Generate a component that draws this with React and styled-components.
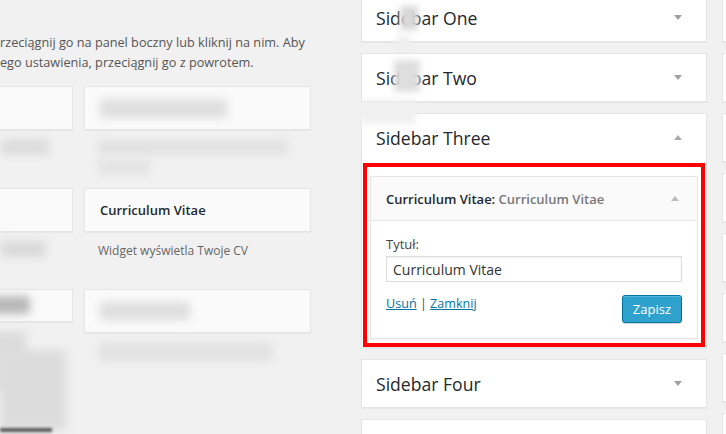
import React from "react";
import styled, { createGlobalStyle } from "styled-components";

const GlobalStyle = createGlobalStyle`
  html, body {
    margin: 0;
    padding: 0;
    background: #f1f1f1;
    overflow: hidden;
  }
  body {
    font-family: "Open Sans", "Noto Sans", sans-serif;
    color: #444;
  }
`;

const Page = styled.div`
  display: flex;
  height: 434px;
  overflow: hidden;
  position: relative;
`;

const LeftArea = styled.div`
  flex: none;
  width: 361px;
  overflow: hidden;
  padding-top: 32px;
  box-sizing: border-box;
`;

const Intro = styled.p`
  margin: 0;
  font-size: 12.7px;
  line-height: 20px;
  color: #555;
  white-space: nowrap;
`;

const WidgetGrid = styled.div`
  display: grid;
  grid-template-columns: 227px 227px;
  grid-auto-rows: 101.5px;
  column-gap: 11px;
  margin: 14px 0 0 -154px;
`;

const Item = styled.div`
  display: flex;
  flex-direction: column;
`;

const Card = styled.div`
  height: 44px;
  box-sizing: border-box;
  border: 1px solid #e5e5e5;
  background: #fafafa;
  box-shadow: 0 1px 1px rgba(0, 0, 0, 0.04);
  padding: 0 15px;
  display: flex;
  align-items: center;
  font-size: 13px;
  font-weight: 600;
  color: #23282d;
`;

const Desc = styled.div`
  padding: 9px 14px 0 14px;
  font-size: 12px;
  line-height: 20px;
  color: #666;
  display: flex;
  flex-direction: column;
  gap: 4px;
`;

const Blur = styled.span`
  display: block;
  width: ${(p) => p.$w}px;
  height: ${(p) => p.$h || 16}px;
  margin-left: ${(p) => p.$ml || 0}px;
  background: ${(p) => p.$c || "#d6d6d6"};
  filter: blur(4px);
  border-radius: 3px;
`;

const SidebarColumn = styled.div`
  flex: none;
  width: 346px;
  display: flex;
  flex-direction: column;
  gap: 11px;
  margin-top: -7px;
`;

const RightColumn = styled(SidebarColumn)`
  width: 100px;
  margin-left: 15px;
`;

const Box = styled.div`
  position: relative;
  flex: none;
  background: #fff;
  border: 1px solid #e5e5e5;
  box-shadow: 0 1px 1px rgba(0, 0, 0, 0.04);
  min-height: 47px;
`;

const BoxHeader = styled.div`
  height: 47px;
  display: flex;
  align-items: center;
  justify-content: space-between;
  padding: 0 24px 0 14px;
`;

const BoxTitle = styled.h2`
  margin: 0;
  font-size: 17.6px;
  font-weight: 400;
  color: #23282d;
`;

const Arrow = styled.span`
  width: 0;
  height: 0;
  border-left: 4px solid transparent;
  border-right: 4px solid transparent;
  ${(p) =>
    p.$up
      ? `border-bottom: 5px solid ${p.$c || "#aaa"};`
      : `border-top: 5px solid ${p.$c || "#a0a0a0"};`}
`;

const BoxBody = styled.div`
  padding: 15px 8px 8px;
`;

const Widget = styled.div`
  border: 1px solid #e5e5e5;
  background: #fff;
  box-shadow: 0 1px 1px rgba(0, 0, 0, 0.04);
`;

const WidgetTop = styled.div`
  height: 43px;
  background: #fafafa;
  border-bottom: 1px solid #e5e5e5;
  display: flex;
  align-items: center;
  justify-content: space-between;
  padding: 0 18px 0 15px;
`;

const WidgetTitle = styled.h4`
  margin: 0;
  font-size: 13px;
  font-weight: 600;
  color: #23282d;
  span {
    color: #777;
  }
`;

const WidgetInside = styled.div`
  padding: 13px 15px 15px;
`;

const Label = styled.label`
  display: block;
  font-size: 13px;
  line-height: 20px;
  color: #444;
  margin-bottom: 2px;
`;

const Input = styled.input`
  display: block;
  width: 100%;
  height: 26px;
  box-sizing: border-box;
  border: 1px solid #ddd;
  box-shadow: inset 0 1px 2px rgba(0, 0, 0, 0.07);
  padding: 0 6px;
  font-family: "Open Sans", "Noto Sans", sans-serif;
  font-size: 14px;
  color: #333;
  outline: none;
`;

const Controls = styled.div`
  display: flex;
  justify-content: space-between;
  align-items: flex-start;
  margin-top: 13px;
`;

const Links = styled.div`
  font-size: 12.6px;
  line-height: 18px;
  color: #444;
  a {
    color: #0074a2;
    text-decoration: underline;
  }
`;

const Button = styled.button`
  height: 28px;
  padding: 0 10px;
  border: 1px solid #0074a2;
  border-radius: 3px;
  background: #2ea2cc;
  box-shadow: inset 0 1px 0 rgba(120, 200, 230, 0.5), 0 1px 0 rgba(0, 0, 0, 0.15);
  color: #fff;
  font-family: "Open Sans", "Noto Sans", sans-serif;
  font-size: 13px;
`;

const Highlight = styled.div`
  position: absolute;
  left: 1px;
  top: 49px;
  width: 342px;
  height: 184px;
  box-sizing: border-box;
  border: 4px solid #ff0000;
  pointer-events: none;
`;

const Smudge = styled.div`
  position: absolute;
  left: ${(p) => p.$x}px;
  top: ${(p) => p.$y}px;
  width: ${(p) => p.$w}px;
  height: ${(p) => p.$h}px;
  background: ${(p) => p.$c};
  filter: blur(${(p) => p.$b || 3}px);
  pointer-events: none;
`;

const sidebarsAbove = ["Sidebar One", "Sidebar Two"];

export default function App() {
  return (
    <>
      <GlobalStyle />
      <Page>
        <LeftArea>
          <Intro>
            rzeciągnij go na panel boczny lub kliknij na nim. Aby
            <br />
            ego ustawienia, przeciągnij go z powrotem.
          </Intro>
          <WidgetGrid>
            <Item>
              <Card />
              <Desc>
                <Blur $w={48} $ml={141} $c="#dcdcdc" />
              </Desc>
            </Item>
            <Item>
              <Card>
                <Blur $w={127} $h={19} $c="#dedede" />
              </Card>
              <Desc>
                <Blur $w={190} $c="#e2e2e2" />
                <Blur $w={52} $c="#e4e4e4" />
              </Desc>
            </Item>
            <Item>
              <Card />
              <Desc>
                <Blur $w={45} $ml={141} $c="#dadada" />
              </Desc>
            </Item>
            <Item>
              <Card>Curriculum Vitae</Card>
              <Desc>Widget wyświetla Twoje CV</Desc>
            </Item>
            <Item>
              <Card>
                <Blur $w={44} $h={18} $ml={124} $c="#b8b8b8" />
              </Card>
              <Desc>
                <Blur $w={40} $h={60} $ml={126} $c="#dcdcdc" />
              </Desc>
            </Item>
            <Item>
              <Card>
                <Blur $w={90} $h={18} $c="#dedede" />
              </Card>
              <Desc>
                <Blur $w={175} $h={20} $c="#e2e2e2" />
              </Desc>
            </Item>
          </WidgetGrid>
        </LeftArea>

        <SidebarColumn>
          {sidebarsAbove.map((name) => (
            <Box key={name}>
              <BoxHeader>
                <BoxTitle>{name}</BoxTitle>
                <Arrow />
              </BoxHeader>
            </Box>
          ))}
          <Box>
            <BoxHeader>
              <BoxTitle>Sidebar Three</BoxTitle>
              <Arrow $up />
            </BoxHeader>
            <BoxBody>
              <Widget>
                <WidgetTop>
                  <WidgetTitle>
                    Curriculum Vitae:<span> Curriculum Vitae</span>
                  </WidgetTitle>
                  <Arrow $up $c="#bbb" />
                </WidgetTop>
                <WidgetInside>
                  <Label>Tytuł:</Label>
                  <Input defaultValue="Curriculum Vitae" />
                  <Controls>
                    <Links>
                      <a href="#usun">Usuń</a> | <a href="#zamknij">Zamknij</a>
                    </Links>
                    <Button type="button">Zapisz</Button>
                  </Controls>
                </WidgetInside>
              </Widget>
            </BoxBody>
            <Highlight />
          </Box>
          <Box>
            <BoxHeader>
              <BoxTitle>Sidebar Four</BoxTitle>
              <Arrow />
            </BoxHeader>
          </Box>
          <Box />
        </SidebarColumn>

        <RightColumn>
          {Array.from({ length: 8 }).map((_, i) => (
            <Box key={i} />
          ))}
        </RightColumn>

        <Smudge $x={400} $y={6} $w={18} $h={24} $c="#d8d8d8" />
        <Smudge $x={396} $y={36} $w={14} $h={12} $c="#eeeeee" />
        <Smudge $x={394} $y={60} $w={26} $h={32} $c="#dedede" />
        <Smudge $x={360} $y={100} $w={56} $h={24} $c="#f0f0f0" />
        <Smudge $x={0} $y={350} $w={66} $h={80} $c="#dcdcdc" $b={5} />
        <Smudge $x={0} $y={428} $w={52} $h={4} $c="#555555" $b={1.5} />
      </Page>
    </>
  );
}
